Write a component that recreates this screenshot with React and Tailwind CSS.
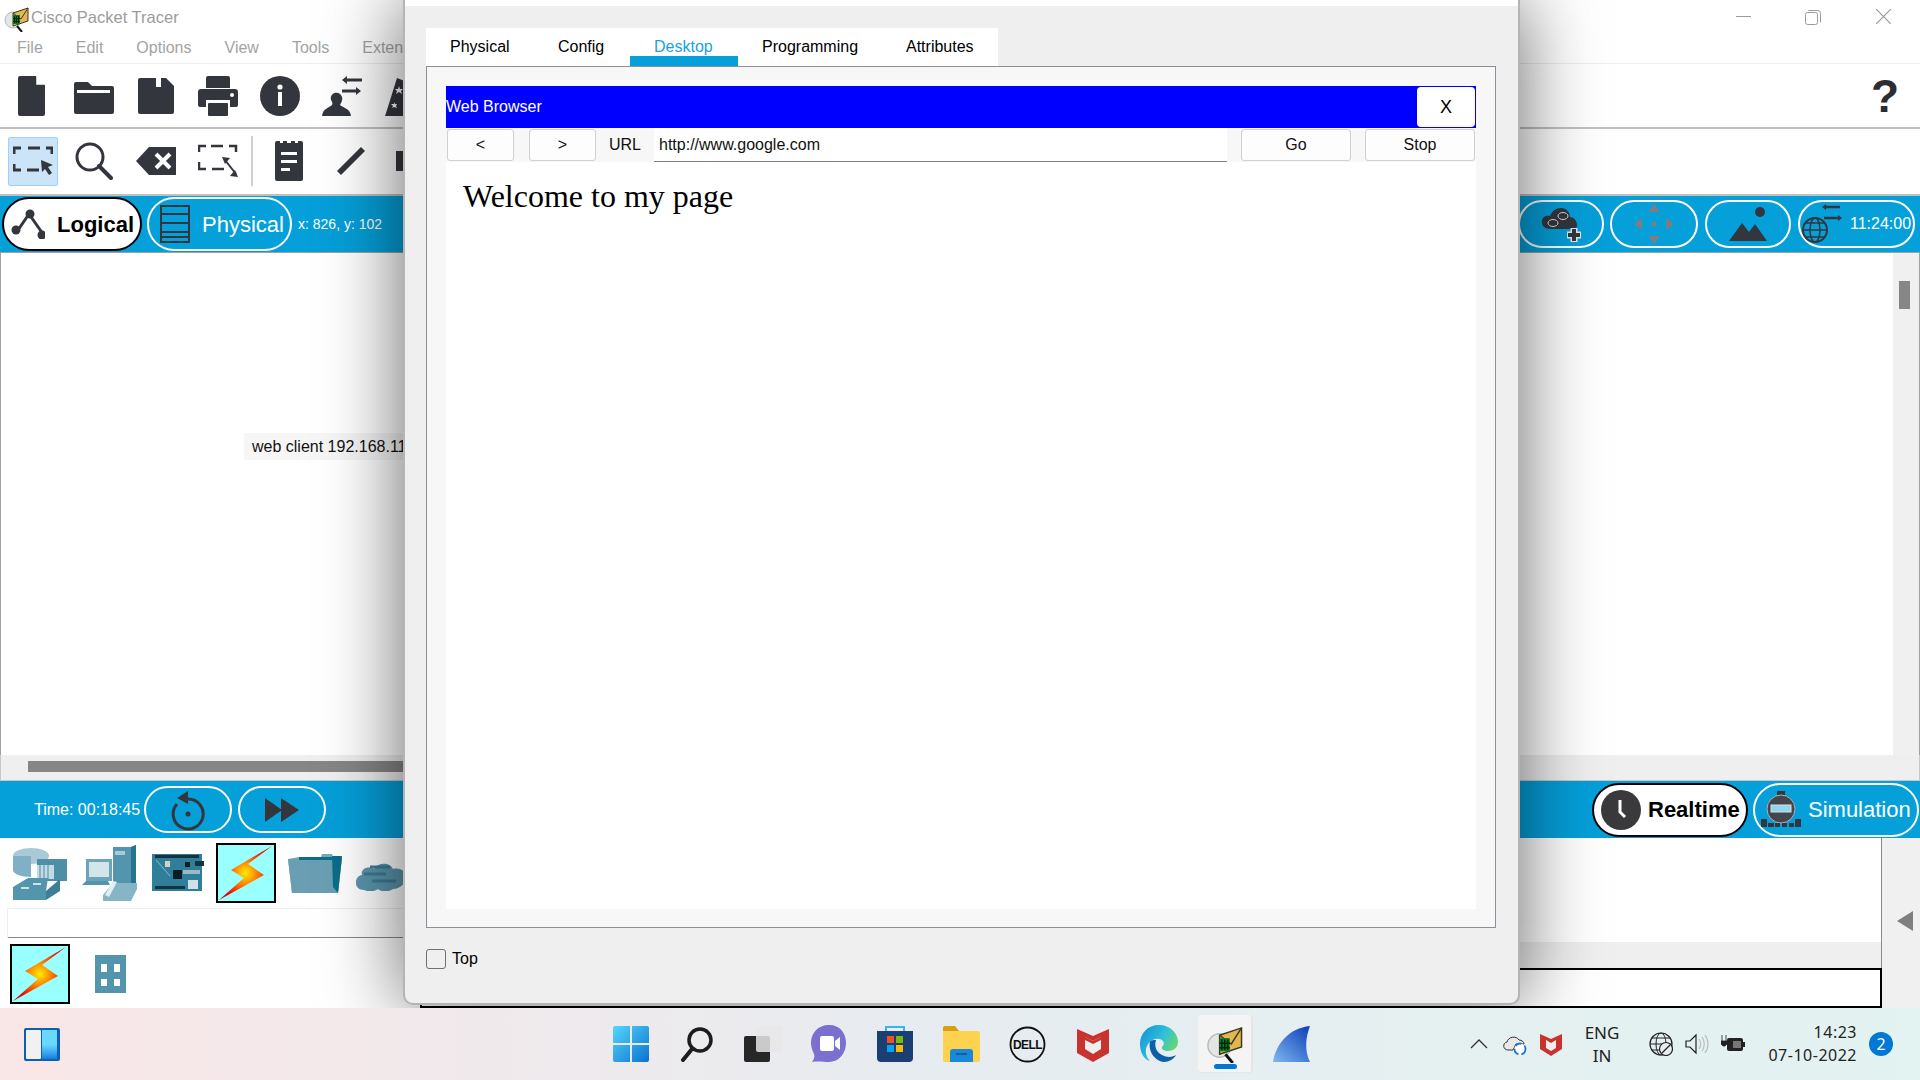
import { useId } from 'react';

const DARK = '#33363d';
const TEAL = '#5395ad';

function Svg({ w, h, vb, className = '', children }) {
  return (
    <svg width={w} height={h} viewBox={vb || `0 0 ${w} ${h}`} className={`shrink-0 ${className}`}>
      {children}
    </svg>
  );
}

function PtLogo({ size = 26 }) {
  return (
    <Svg w={size} h={size} vb="0 0 26 26">
      <circle cx="10" cy="14" r="8" fill="#e4e6e6" stroke="#b9bcbc" />
      <path d="M10 7l15-5v13l-15 5z" fill="#e4b64f" stroke="#3a3a20" strokeWidth="1" />
      <path d="M10 7l8 6 7-11" fill="none" stroke="#3a3a20" strokeWidth="1" />
      <path d="M10 9h7v9h-7z" fill="#0c7a2a" />
      <path d="M11 10h1v7h-1zM13 10h1v7h-1zM15 10h1v7h-1zM10 12h7v1h-7zM10 15h7v1h-7z" fill="#06240f" />
      <path d="M14 20l5 6" stroke="#111" strokeWidth="2" />
    </Svg>
  );
}

function Bolt() {
  const id = useId();
  return (
    <div className="w-[60px] h-[60px] border-2 border-black bg-[#99ffff] shrink-0">
      <svg width="56" height="56" viewBox="0 0 56 56">
        <defs>
          <radialGradient id={id} cx="0.5" cy="0.5" r="0.5">
            <stop offset="0" stopColor="#ffee00" />
            <stop offset="0.35" stopColor="#ff9500" />
            <stop offset="1" stopColor="#ee0000" />
          </radialGradient>
        </defs>
        <path d="M54 1L13 25l13 8L1 55l45-25-16-11z" fill={`url(#${id})`} />
      </svg>
    </div>
  );
}

function TopIcons() {
  return (
    <div className="flex items-center h-full pl-[18px] gap-[29px] w-[404px] overflow-hidden">
      <Svg w={27} h={40}><path d="M2 0h16l9 9v29a2 2 0 0 1-2 2H2a2 2 0 0 1-2-2V2a2 2 0 0 1 2-2z" fill={DARK} /><path d="M19 0l8 8h-8z" fill="#fff" /><path d="M19 0v8h8" fill="none" stroke="#fff" strokeWidth="1.5" /></Svg>
      <Svg w={40} h={32} className="mt-[4px]"><path d="M2 0h12l4 4h20a2 2 0 0 1 2 2v24a2 2 0 0 1-2 2H2a2 2 0 0 1-2-2V2a2 2 0 0 1 2-2z" fill={DARK} /><rect x="3" y="8" width="33" height="3" fill="#fff" /></Svg>
      <Svg w={36} h={36} className="-ml-[5px]"><path d="M2 0h26l8 8v26a2 2 0 0 1-2 2H2a2 2 0 0 1-2-2V2a2 2 0 0 1 2-2z" fill={DARK} /><rect x="18" y="0" width="5" height="9" fill="#fff" /></Svg>
      <Svg w={40} h={40} className="-ml-[5px]"><path d="M10 0h20a2 2 0 0 1 2 2v10H8V2a2 2 0 0 1 2-2z" fill={DARK} /><path d="M3 13h34a3 3 0 0 1 3 3v13a2 2 0 0 1-2 2h-6v-7H8v7H2a2 2 0 0 1-2-2V16a3 3 0 0 1 3-3z" fill={DARK} /><rect x="10" y="27" width="20" height="13" rx="1" fill={DARK} /><circle cx="34" cy="19" r="2" fill="#fff" /></Svg>
      <Svg w={40} h={40} className="-ml-[7px]"><circle cx="20" cy="20" r="20" fill={DARK} /><circle cx="20" cy="11" r="2.6" fill="#fff" /><rect x="18" y="16" width="4" height="14" fill="#fff" /></Svg>
      <Svg w={40} h={40} className="-ml-[7px]"><path d="M0 40c1-8 7-8 10-11 1-2 0-3-1-5-2-8 9-10 11-3 1 3-1 6-2 8 3 3 10 3 11 11z" fill={DARK} /><path d="M23 4h17" stroke={DARK} strokeWidth="3" fill="none" /><path d="M25 0l-5 4 5 4z" fill={DARK} /><path d="M20 15h16" stroke={DARK} strokeWidth="3" /><path d="M34 11l5 4-5 4z" fill={DARK} /></Svg>
      <Svg w={20} h={40} className="-ml-[6px]"><path d="M0 40l2-6L12 2l8 3v35z" fill={DARK} /><path d="M14 10l1 3 3 0-2 2 1 3-3-2-3 2 1-3-2-2 3 0zM9 26l1 2 2 0-1 2 1 2-3-1-2 1 1-2-2-2 3 0z" fill="#fff" /></Svg>
    </div>
  );
}

function EditIcons() {
  return (
    <div className="flex items-center h-full pl-[8px] w-[404px] overflow-hidden">
      <div className="w-[50px] h-[49px] bg-[#cce4f7] border border-[#99d1ff] rounded-[2px] flex items-center justify-center shrink-0">
        <Svg w={40} h={30}>
          <path d="M1 8V2h7M15 2h12M33 2h6v6M1 18v6h7M14 24h12" fill="none" stroke={DARK} strokeWidth="3" />
          <path d="M28 14l12 5-5 2 4 6-3 2-4-6-3 3z" fill={DARK} />
        </Svg>
      </div>
      <Svg w={38} h={38} className="ml-[17px]"><circle cx="15" cy="15" r="13" fill="none" stroke={DARK} strokeWidth="3" /><path d="M24 24l12 12" stroke={DARK} strokeWidth="4" strokeLinecap="round" /></Svg>
      <Svg w={40} h={28} className="ml-[23px]"><path d="M13 0h27v28H13L0 14z" fill={DARK} /><path d="M20 7l14 14M34 7L20 21" stroke="#fff" strokeWidth="4" /></Svg>
      <Svg w={40} h={34} className="ml-[22px]"><path d="M1 8V2h7M13 2h12M31 2h7v6M1 18v7h7M14 25h12" fill="none" stroke={DARK} strokeWidth="2.5" /><path d="M27 16l11 14" stroke={DARK} strokeWidth="2" /><path d="M24 13l8 1-5 6zM40 33l-8-1 5-6z" fill={DARK} /></Svg>
      <div className="w-[2px] h-[50px] bg-[#cfcfcf] ml-[13px]" />
      <Svg w={28} h={40} className="ml-[22px]"><path d="M2 0h3v2h3V0h4v2h4V0h4v2h3V0h3a2 2 0 0 1 2 2v36a2 2 0 0 1-2 2H2a2 2 0 0 1-2-2V2a2 2 0 0 1 2-2z" fill={DARK} /><path d="M6 11h16v3H6zM6 19h16v3H6zM6 27h9v3H6z" fill="#fff" /></Svg>
      <Svg w={28} h={28} className="ml-[34px]"><path d="M0 24L24 0l4 4L4 28z" fill={DARK} /></Svg>
      <div className="w-[8px] h-[20px] bg-[#33363d] ml-[31px] shrink-0" />
    </div>
  );
}

function Pill({ active, className = '', children }) {
  return (
    <div
      className={`flex items-center shrink-0 rounded-[27px] border-2 ${
        active ? 'bg-white border-black text-black font-bold' : 'border-white text-white'
      } ${className}`}
    >
      {children}
    </div>
  );
}

function Device({ children }) {
  return <div className="flex items-center justify-center shrink-0">{children}</div>;
}

function DeviceIcons() {
  return (
    <div className="flex items-center h-[70px] pl-[13px]">
      <Device>
        <Svg w={54} h={54}>
          <ellipse cx="18" cy="10" rx="18" ry="8" fill="#a9c9d6" />
          <path d="M0 10v14c0 4 8 7 18 7V10z" fill="#7fb0c3" />
          <rect x="24" y="13" width="30" height="22" fill="#4e8ea6" />
          <path d="M24 19h17v14H24z" fill="#c2dbe4" />
          <path d="M27 19v14M31 19v14M35 19v14" stroke="#4e8ea6" />
          <path d="M0 41l15-9h20l-2 13v9H0z" fill={TEAL} />
          <path d="M33 54l14-9V33l-14 12z" fill="#3e7e96" />
          <path d="M8 42h8M20 38h8" stroke="#cfe3ea" strokeWidth="2" />
        </Svg>
      </Device>
      <Device>
        <Svg w={56} h={56} className="ml-[14px]">
          <path d="M32 2h18l5-2v44l-5 3H32z" fill={TEAL} />
          <path d="M50 2l5-2v44l-5 3z" fill="#27728d" />
          <rect x="34" y="6" width="10" height="4" fill="#a9c9d6" />
          <rect x="5" y="14" width="26" height="22" fill="#6ea4b8" />
          <rect x="8" y="17" width="20" height="15" fill="#d3e4ea" />
          <path d="M1 40h28l-2-4H5z" fill={TEAL} />
          <path d="M22 50l10-12h24v6l-6 12H22z" fill="#86b5c6" />
          <path d="M32 36l4 1-8 15-4-2z" fill="#dfeef3" />
        </Svg>
      </Device>
      <Device>
        <Svg w={52} h={38} className="ml-[15px]">
          <rect width="50" height="37" fill="#2f7f9a" />
          <rect x="3" y="1" width="44" height="3" fill="#14323f" />
          <rect x="3" y="32" width="30" height="3" fill="#14323f" />
          <rect x="21" y="16" width="9" height="9" fill="#0d1c24" />
          <rect x="33" y="8" width="5" height="5" fill="#0d1c24" />
          <rect x="43" y="7" width="9" height="5" fill="#14323f" />
          <rect x="31" y="16" width="17" height="4" fill="#9bb8c4" />
          <rect x="36" y="26" width="10" height="9" fill="#cfe0e6" />
          <rect x="13" y="7" width="5" height="6" fill="#d8d0c0" />
          <path d="M4 6l14 16" stroke="#7fbdd2" />
        </Svg>
      </Device>
      <div className="ml-[12px]"><Bolt /></div>
      <Device>
        <Svg w={54} h={40} className="ml-[12px]">
          <path d="M11 4h22l1-3h10l1 3h9l-4 36H4L0 6z" fill="#77a9bb" />
          <path d="M0 6h40l14-1-4 35H4z" fill="#6a9fb3" />
          <path d="M44 3h10l-4 37-5-6z" fill="#0b6e89" />
          <path d="M11 4h33v3H11z" fill="#0b6e89" />
        </Svg>
      </Device>
      <Device>
        <Svg w={50} h={36} className="ml-[14px]">
          <path d="M8 35c-11 0-10-14-2-15-2-8 9-9 12-6 5-8 17-6 19 0 8-2 13 3 13 8s-5 12-13 12c-4 3-12 3-15 0-4 3-10 3-14 1z" fill="#5b96ad" />
          <path d="M14 12h20M8 19h22M16 26h24" stroke="#3d7c94" strokeWidth="3" />
        </Svg>
      </Device>
    </div>
  );
}

function TaskbarIcons() {
  const winId = useId();
  const edgeId = useId();
  const sharkId = useId();
  return (
    <div className="flex h-full ml-[538px]">
      {[
        <Svg w={36} h={36} key="win">
          <defs><linearGradient id={winId} x1="0" y1="0" x2="1" y2="1"><stop offset="0" stopColor="#55d6fb" /><stop offset="1" stopColor="#0b72d0" /></linearGradient></defs>
          <path d="M0 2a2 2 0 0 1 2-2h15v17H0zM19 0h15a2 2 0 0 1 2 2v15H19zM0 19h17v17H2a2 2 0 0 1-2-2zM19 19h17v15a2 2 0 0 1-2 2H19z" fill={`url(#${winId})`} />
        </Svg>,
        <Svg w={34} h={36} key="search">
          <circle cx="20" cy="14" r="11" fill="none" stroke="#1c1c1c" strokeWidth="3.5" />
          <path d="M12 23L3 34" stroke="#1c1c1c" strokeWidth="4" strokeLinecap="round" />
        </Svg>,
        <Svg w={38} h={36} key="task">
          <rect x="0" y="10" width="26" height="26" rx="2" fill="#272727" />
          <rect x="12" y="0" width="26" height="26" rx="2" fill="#e8e8e8" fillOpacity="0.85" />
        </Svg>,
        <Svg w={36} h={38} key="teams">
          <path d="M18 0c11 0 17 8 17 18s-7 19-17 19c-5 0-11-1-17 0 2-3 3-5 2-8-2-4-3-8-3-11C0 8 7 0 18 0z" fill="#7b6fd0" />
          <rect x="9" y="11" width="14" height="15" rx="2" fill="#fff" />
          <path d="M24 16l5-4v13l-5-4z" fill="#fff" />
        </Svg>,
        <Svg w={36} h={38} key="store">
          <path d="M9 7V2h18v5" fill="none" stroke="#35b6ee" strokeWidth="2" />
          <path d="M0 6h36v27a4 4 0 0 1-4 4H4a4 4 0 0 1-4-4z" fill="#1b3f72" />
          <rect x="10" y="11" width="7" height="7" fill="#f25022" /><rect x="19" y="11" width="7" height="7" fill="#7fba00" />
          <rect x="10" y="20" width="7" height="7" fill="#00a4ef" /><rect x="19" y="20" width="7" height="7" fill="#ffb900" />
        </Svg>,
        <Svg w={37} h={36} key="files">
          <path d="M0 2a2 2 0 0 1 2-2h10l4 5H0z" fill="#d79f12" />
          <path d="M0 5h35a2 2 0 0 1 2 2v27a2 2 0 0 1-2 2H2a2 2 0 0 1-2-2z" fill="#fdd24f" />
          <path d="M7 36V26a3 3 0 0 1 3-3h17a3 3 0 0 1 3 3v10z" fill="#1a88d8" />
          <rect x="13" y="27" width="11" height="2" fill="#0f5f9e" />
        </Svg>,
        <Svg w={37} h={37} key="dell">
          <circle cx="18.5" cy="18.5" r="17" fill="none" stroke="#111" strokeWidth="1.8" />
          <text x="18.5" y="23" textAnchor="middle" fontFamily="Liberation Sans" fontWeight="700" fontSize="12" letterSpacing="-0.6" fill="#111">DELL</text>
        </Svg>,
        <Svg w={32} h={36} key="mcafee">
          <path d="M0 3l16 7 16-7v24l-16 9-16-9z" fill="#c8332f" />
          <path d="M8 11l8 4 8-4v12l-8 5-8-5z" fill="#f1eeee" />
          <path d="M8 11v3l8 4 8-4v-3l-8 4z" fill="#c8332f" />
        </Svg>,
        <Svg w={38} h={38} key="edge">
          <defs><linearGradient id={edgeId} x1="0" y1="0" x2="1" y2="0.6"><stop offset="0" stopColor="#0c8fd8" /><stop offset="0.6" stopColor="#33c2d8" /><stop offset="1" stopColor="#6fd95f" /></linearGradient></defs>
          <path d="M19 0c11 0 19 8 19 17 0 6-5 9-10 9-4 0-7-2-6-4 1-1 3-3 1-6-3-3-9-3-13 1-5 4-6 13 0 19C4 35 0 27 0 19 0 8 8 0 19 0z" fill={`url(#${edgeId})`} />
          <path d="M10 17c-2 8 4 19 14 20 5 0 10-3 12-7-3 2-9 3-14 0-6-3-8-9-6-15-2 0-5 0-6 2z" fill="#0c5fa8" />
        </Svg>,
        <div key="pt" className="relative w-[55px] h-[58px] bg-[#f4f4f4] border-r-2 border-b border-[#e6e6e6] rounded-[4px] flex items-center justify-center">
          <PtLogo size={38} />
          <div className="absolute bottom-[3px] left-[16px] w-[23px] h-[5px] rounded-full bg-[#0078d4]" />
        </div>,
        <Svg w={37} h={36} key="shark">
          <defs><linearGradient id={sharkId} x1="1" y1="0" x2="0" y2="1"><stop offset="0" stopColor="#0b3fb8" /><stop offset="1" stopColor="#7fb8f0" /></linearGradient></defs>
          <path d="M37 0c-4 10-6 24 0 36H0C3 18 16 2 37 0z" fill={`url(#${sharkId})`} />
        </Svg>,
      ].map((icon, i) => (
        <div key={i} className="w-[66px] h-full flex items-center justify-center">{icon}</div>
      ))}
    </div>
  );
}

function Browser() {
  return (
    <div className="w-[1070px] h-[862px] border border-[#8b9098] bg-[#f7f7f7] p-[19px] pb-[18px] flex flex-col">
      <div className="h-[42px] bg-[#0000ff] flex items-center justify-between shrink-0 pr-[1px]">
        <span className="text-white">Web Browser</span>
        <button className="w-[58px] h-[40px] bg-white rounded-[4px] text-[18px] text-black">X</button>
      </div>
      <div className="h-[34px] flex items-start shrink-0">
        <button className="w-[67px] h-[32px] mt-[1px] ml-[1px] bg-[#fdfdfd] border border-[#d0d0d0] rounded-[3px]">&lt;</button>
        <button className="w-[67px] h-[32px] mt-[1px] ml-[15px] bg-[#fdfdfd] border border-[#d0d0d0] rounded-[3px]">&gt;</button>
        <span className="w-[58px] h-[34px] flex items-center justify-center">URL</span>
        <div className="w-[573px] h-[34px] bg-white border-b border-[#808080] pl-[5px] flex items-center">http://www.google.com</div>
        <button className="w-[110px] h-[32px] mt-[1px] ml-[14px] bg-[#fdfdfd] border border-[#d0d0d0] rounded-[3px]">Go</button>
        <button className="w-[110px] h-[32px] mt-[1px] ml-[14px] bg-[#fdfdfd] border border-[#d0d0d0] rounded-[3px]">Stop</button>
      </div>
      <div className="flex-1 bg-white pl-[17px] pt-[15px]">
        <h1 className="font-['Liberation_Serif',serif] text-[32px] leading-[38px] text-black">Welcome to my page</h1>
      </div>
    </div>
  );
}

function Dialog() {
  return (
    <div className="absolute left-[403px] top-0 w-[1117px] h-[1005px] border-x-2 border-b-2 border-[#b4b4b4] rounded-b-[10px] bg-[#efefef] shadow-[0_0_80px_rgba(0,0,0,0.6)] overflow-hidden">
      <div className="h-[6px] bg-white" />
      <div className="pl-[21px] pt-[22px]">
        <div className="flex w-[572px] h-[38px] bg-white text-black leading-[19px]">
          <div className="w-[132px] pl-[24px] pt-[9px]">Physical</div>
          <div className="w-[72px] pt-[9px]">Config</div>
          <div className="w-[108px] h-full pl-[24px] pt-[9px] text-[#17a3de] border-b-[10px] border-[#059fd9]">Desktop</div>
          <div className="w-[168px] pl-[24px] pt-[9px]">Programming</div>
          <div className="pt-[9px]">Attributes</div>
        </div>
        <Browser />
        <div className="flex items-center mt-[19px]">
          <div className="w-[20px] h-[20px] border border-[#707070] rounded-[3px]" />
          <span className="ml-[6px] text-black">Top</span>
        </div>
      </div>
    </div>
  );
}

export default function App() {
  return (
    <div className="w-[1920px] h-[1080px] flex flex-col overflow-hidden font-['Liberation_Sans',Arial,sans-serif] text-[16px] text-[#111]">
      <div className="relative h-[1008px] flex flex-col bg-white overflow-hidden shrink-0">
        {/* title */}
        <div className="h-[37px] flex items-center pl-[3px] shrink-0">
          <PtLogo />
          <span className="ml-[2px] text-[16.5px] -mt-[2px] text-[#9c9c9c]">Cisco Packet Tracer</span>
          <div className="ml-auto flex items-center pr-[29px] -mt-[4px]">
            <div className="w-[15px] h-px bg-[#9a9a9a]" />
            <Svg w={16} h={16} className="ml-[54px]"><rect x="0.5" y="3.5" width="12" height="12" rx="2" fill="none" stroke="#9a9a9a" /><path d="M3.5 1.5h9a3 3 0 0 1 3 3v9" fill="none" stroke="#9a9a9a" /></Svg>
            <Svg w={15} h={15} className="ml-[55px]"><path d="M0 0l15 15M15 0L0 15" stroke="#9a9a9a" strokeWidth="1.2" /></Svg>
          </div>
        </div>
        {/* menu */}
        <div className="h-[27px] border-b border-[#eeeeee] text-[#a3a3a3] flex items-center pl-[17px] gap-[33px] shrink-0 leading-none pb-[5px]">
          <span>File</span>
          <span>Edit</span>
          <span>Options</span>
          <span>View</span>
          <span>Tools</span>
          <span>Extensions</span>
        </div>
        {/* main toolbar */}
        <div className="h-[65px] border-b-2 border-[#c0c0c0] flex items-center justify-between pr-[21px] shrink-0">
          <TopIcons />
          <span className="text-[46px] font-bold leading-none text-[#2b2d33]">?</span>
        </div>
        {/* edit toolbar */}
        <div className="h-[67px] border-b-2 border-[#c0c0c0] pb-[1px] shrink-0">
          <EditIcons />
        </div>
        {/* logical / physical bar */}
        <div className="h-[56px] bg-[#059fd9] flex items-center text-white shrink-0">
          <Pill active className="w-[140px] h-[54px] ml-[2px] text-[22px]">
            <Svg w={34} h={30} className="ml-[7px]">
              <path d="M18 5L7 21M18 5l14 20" stroke={DARK} strokeWidth="3" />
              <circle cx="19" cy="5" r="4.5" fill={DARK} />
              <circle cx="5" cy="21" r="4.5" fill={DARK} />
              <circle cx="31" cy="26" r="4.5" fill={DARK} />
            </Svg>
            <span className="ml-[12px]">Logical</span>
          </Pill>
          <Pill className="w-[145px] h-[54px] ml-[5px] text-[22px]">
            <Svg w={30} h={38} className="ml-[11px]">
              <rect x="1" y="1" width="28" height="36" fill="none" stroke={DARK} strokeWidth="2" />
              <path d="M1 9h28M1 18h28M1 27h28M1 32h28" stroke={DARK} strokeWidth="2" />
            </Svg>
            <span className="ml-[12px]">Physical</span>
          </Pill>
          <span className="ml-[6px] text-[14px]">x: 826, y: 102</span>
          <div className="ml-auto flex items-center pr-[5px]">
            <Pill className="w-[86px] h-[48px] justify-center">
              <Svg w={40} h={38}>
                <path d="M10 24c-7 0-10-4-9-9 1-4 5-5 8-4 2-5 6-8 11-8 5 0 9 4 9 9 4 0 7 4 7 8 0 2-1 4-2 4z" fill={DARK} />
                <ellipse cx="22" cy="11" rx="5" ry="3.5" fill="none" stroke="#ddd" /><ellipse cx="12" cy="18" rx="5" ry="3.5" fill="none" stroke="#ddd" />
                <path d="M26 30h14M33 23v14" stroke="#e6e6e6" strokeWidth="7" />
                <path d="M27 30h12M33 24v12" stroke={DARK} strokeWidth="4" />
              </Svg>
            </Pill>
            <Pill className="w-[88px] h-[48px] ml-[6px] justify-center">
              <Svg w={40} h={40}>
                <path d="M20 0l6 8H14zM20 40l-6-8h12zM0 20l8-6v12zM40 20l-8 6V14z" fill="#7a7f86" />
                <circle cx="20" cy="20" r="2.5" fill="#7a7f86" />
              </Svg>
            </Pill>
            <Pill className="w-[86px] h-[48px] ml-[7px] justify-center">
              <Svg w={38} h={38}>
                <circle cx="31" cy="7" r="5" fill={DARK} />
                <path d="M0 36l13-18 7 9 6-8 12 17z" fill={DARK} />
              </Svg>
            </Pill>
            <Pill className="w-[117px] h-[48px] ml-[7px]">
              <Svg w={40} h={40} className="ml-[2px] -mt-[2px]">
                <circle cx="13" cy="27" r="12" fill="none" stroke={DARK} strokeWidth="2" />
                <ellipse cx="13" cy="27" rx="5" ry="12" fill="none" stroke={DARK} strokeWidth="1.5" />
                <path d="M1 27h24M3 20h20M3 34h20" stroke={DARK} strokeWidth="1.5" />
                <path d="M22 4h16M22 15h16" stroke={DARK} strokeWidth="2.5" />
                <path d="M20 4l4-3v6zM40 15l-4-3v6z" fill={DARK} />
              </Svg>
              <span className="ml-[8px]">11:24:00</span>
            </Pill>
          </div>
        </div>
        {/* canvas */}
        <div className="relative flex-1 flex justify-end border-t border-x border-[#a0a0a0]">
          <div className="absolute left-[243px] top-[180px] w-[170px] h-[27px] bg-[#f6f6f6] pl-[8px] flex items-center whitespace-nowrap overflow-hidden">web client 192.168.11</div>
          <div className="w-[26px] h-full bg-[#f0f0f0] pt-[28px] pl-[6px]">
            <div className="w-[11px] h-[28px] bg-[#868686]" />
          </div>
        </div>
        <div className="h-[26px] bg-[#efefef] border-x border-b border-[#c8c8c8] pl-[27px] pt-[6px] shrink-0">
          <div className="w-[500px] h-[11px] bg-[#868686]" />
        </div>
        {/* time bar */}
        <div className="h-[57px] bg-[#059fd9] flex items-center text-white shrink-0">
          <span className="ml-[34px] w-[110px]">Time: 00:18:45</span>
          <Pill className="w-[88px] h-[47px] justify-center">
            <Svg w={36} h={42}>
              <path d="M18 10a15 15 0 1 1-11 5" fill="none" stroke={DARK} strokeWidth="3" />
              <path d="M18 2L7 9l11 6z" fill={DARK} />
              <circle cx="18" cy="25" r="2.5" fill={DARK} />
            </Svg>
          </Pill>
          <Pill className="w-[88px] h-[47px] ml-[6px] justify-center">
            <Svg w={34} h={24}><path d="M0 0l17 12L0 24zM16 0l18 12-18 12z" fill={DARK} /></Svg>
          </Pill>
          <div className="ml-auto flex items-center gap-[5px] pr-px">
            <Pill active className="w-[156px] h-[54px] text-[22px]">
              <Svg w={40} h={40} className="ml-[7px]">
                <circle cx="20" cy="20" r="20" fill="#3a3a3c" />
                <path d="M19 10v12l5 5" fill="none" stroke="#fff" strokeWidth="3" />
              </Svg>
              <span className="ml-[7px]">Realtime</span>
            </Pill>
            <Pill className="w-[166px] h-[54px] text-[22px]">
              <Svg w={40} h={38} className="ml-[6px]">
                <rect x="16" y="0" width="8" height="5" fill={DARK} />
                <circle cx="20" cy="18" r="14" fill="#42464d" stroke="#aeb0b3" />
                <rect x="10" y="14" width="20" height="7" fill="#8fd6f0" stroke="#ddd" />
                <path d="M0 28h6v8H0zM7 32h6v4H7zM14 32h5v4h-5zM21 32h5v4h-5zM28 32h5v4h-5zM34 28h6v8h-6z" fill={DARK} />
              </Svg>
              <span className="ml-[7px]">Simulation</span>
            </Pill>
          </div>
        </div>
        {/* bottom panels */}
        <div className="h-[170px] flex shrink-0">
          <div className="w-[420px] shrink-0">
            <DeviceIcons />
            <div className="mx-[7px] h-[30px] border border-[#eeeeee] border-b-[#888888] rounded-[2px]" />
            <div className="flex items-center pl-[10px] pt-[6px]">
              <Bolt />
              <div className="w-[31px] h-[38px] bg-[#5395ad] ml-[25px] grid grid-cols-2 gap-[7px] p-[6px] pt-[9px] pb-[7px]">
                <div className="bg-white" />
                <div className="bg-white" />
                <div className="bg-white" />
                <div className="bg-white" />
              </div>
            </div>
          </div>
          <div className="flex-1 flex flex-col">
            <div className="flex-1 border-r border-[#8a8a8a]" />
            <div className="h-[26px] bg-[#efefef] border-r border-[#8a8a8a]" />
            <div className="h-[40px] border-2 border-black" />
          </div>
          <div className="w-[38px] bg-[#f0f0f0] flex items-center justify-end pr-[7px] pb-[4px]">
            <Svg w={16} h={20}><path d="M16 0v20L0 10z" fill="#7f7f7f" /></Svg>
          </div>
        </div>
        <Dialog />
      </div>
      {/* taskbar */}
      <div className="h-[72px] flex items-center bg-gradient-to-r from-[#f9e6e7] via-[#e6ecf0] to-[#e3f3f1] font-['Noto_Sans',sans-serif] pl-[24px] shrink-0">
        <div className="w-[36px] h-[33px] rounded-[2px] bg-[#0f5fb0] p-[2px] flex gap-[1px] shrink-0">
          <div className="w-[15px] bg-[#f1f1f1] rounded-[1px]" />
          <div className="w-[15px] bg-gradient-to-b from-[#68d8ff] via-[#68d8ff] to-[#0f7fe0]" />
        </div>
        <TaskbarIcons />
        <div className="flex items-center ml-[146px] h-full text-[#222]">
          <Svg w={18} h={10}><path d="M1 9l8-8 8 8" fill="none" stroke="#333" strokeWidth="1.3" /></Svg>
          <Svg w={24} h={22} className="ml-[15px]">
            <path d="M5 17c-5 0-6-7-1-8 1-5 9-7 12-2 3 0 5 2 5 4H13l-3 6z" fill="#e8e8e8" stroke="#333" />
            <circle cx="17" cy="16" r="5.5" fill="#fff" stroke="#1676d2" strokeWidth="1.8" strokeDasharray="7 3" />
          </Svg>
          <Svg w={22} h={24} className="ml-[13px]">
            <path d="M0 2l11 5 11-5v15l-11 7-11-7z" fill="#c8332f" />
            <path d="M6 8l5 3 5-3v8l-5 3-5-3z" fill="#f1eeee" />
          </Svg>
          <div className="w-[38px] ml-[21px] flex flex-col items-center text-[17px] leading-[23px]">
            <span>ENG</span>
            <span>IN</span>
          </div>
          <Svg w={24} h={24} className="ml-[28px]">
            <circle cx="12" cy="12" r="11" fill="none" stroke="#222" strokeWidth="1.2" />
            <ellipse cx="12" cy="12" rx="5" ry="11" fill="none" stroke="#222" />
            <path d="M1 12h22M3 6h18M3 18h18" stroke="#222" />
            <circle cx="17" cy="17" r="6.5" fill="#e8eef0" stroke="#222" strokeWidth="1.2" />
            <path d="M13 21l8-8" stroke="#222" strokeWidth="1.2" />
          </Svg>
          <Svg w={24} h={24} className="ml-[12px]">
            <path d="M1 9h4l6-6v18l-6-6H1z" fill="none" stroke="#222" strokeWidth="1.2" />
            <path d="M14 7c2 3 2 7 0 10M17 5c3 4 3 10 0 14M20 3c4 5 4 13 0 18" fill="none" stroke="#bbb" strokeWidth="1.2" />
          </Svg>
          <Svg w={24} h={18} className="ml-[12px]">
            <path d="M1 0v6M5 0v6M0 6h6v3l-2 2H2L0 9z" fill="#222" stroke="#222" strokeWidth="0.8" />
            <rect x="6" y="3" width="16" height="13" rx="2" fill="#222" />
            <rect x="12" y="6" width="8" height="7" fill="#777" />
            <rect x="22" y="7" width="2" height="5" fill="#222" />
          </Svg>
          <div className="w-[112px] flex flex-col items-end text-[16px] leading-[23px] tracking-[0.5px]">
            <span>14:23</span>
            <span>07-10-2022</span>
          </div>
          <div className="w-[24px] h-[24px] ml-[12px] rounded-full bg-[#0078d4] text-white text-[16px] flex items-center justify-center">2</div>
        </div>
      </div>
    </div>
  );
}
